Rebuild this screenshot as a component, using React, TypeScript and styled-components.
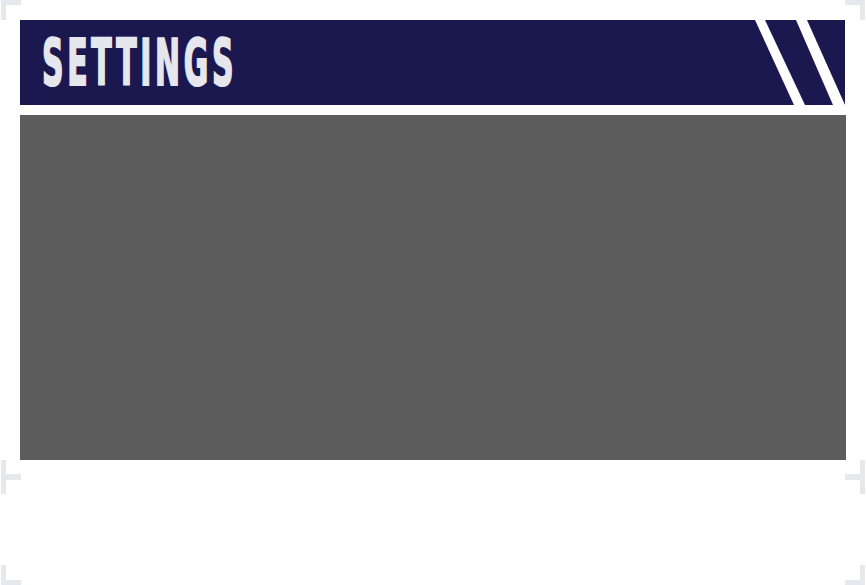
import React from "react";
import styled, { createGlobalStyle, css } from "styled-components";

const Global = createGlobalStyle`
  html, body { margin: 0; padding: 0; background: #ffffff; }
  body { font-family: "DejaVu Sans", sans-serif; overflow: hidden; }
`;

const Page = styled.div`
  width: 866px;
  display: flex;
  flex-direction: column;
`;

const Frame = styled.section<{ $height: number; $overlap?: number }>`
  position: relative;
  box-sizing: border-box;
  width: 866px;
  height: ${(p) => p.$height}px;
  margin-top: ${(p) => -(p.$overlap ?? 0)}px;
  padding: 20px 20px 20px 20px;
  display: flex;
  flex-direction: column;
  gap: 10px;
`;

type Pos = "tl" | "tr" | "bl" | "br";

const Corner = styled.span<{ $pos: Pos }>`
  position: absolute;
  width: 20px;
  height: 20px;
  box-sizing: border-box;
  border: 0 solid #e6e8ed;
  pointer-events: none;
  ${(p) =>
    p.$pos === "tl" &&
    css`
      top: 0;
      left: 1px;
      border-top-width: 5px;
      border-left-width: 5px;
    `}
  ${(p) =>
    p.$pos === "tr" &&
    css`
      top: 0;
      right: 1px;
      border-top-width: 5px;
      border-right-width: 5px;
    `}
  ${(p) =>
    p.$pos === "bl" &&
    css`
      bottom: 0;
      left: 1px;
      border-bottom-width: 5px;
      border-left-width: 5px;
    `}
  ${(p) =>
    p.$pos === "br" &&
    css`
      bottom: 0;
      right: 1px;
      border-bottom-width: 5px;
      border-right-width: 5px;
    `}
`;

const Header = styled.header`
  height: 85px;
  width: 825px;
  background: #1b1850;
  display: flex;
  align-items: center;
  justify-content: space-between;
  overflow: hidden;
  flex-shrink: 0;
`;

const Title = styled.h1`
  margin: 0 0 0 22px;
  font-family: "DejaVu Sans Condensed", "DejaVu Sans", sans-serif;
  font-weight: 700;
  font-size: 64px;
  line-height: 1;
  color: #e5e7ec;
  -webkit-text-stroke: 2px #e5e7ec;
  letter-spacing: 7px;
  transform: scaleX(0.52);
  transform-origin: left center;
  white-space: nowrap;
`;

const Stripes = styled.svg`
  display: block;
  flex-shrink: 0;
`;

const Panel = styled.div`
  flex: 0 0 345px;
  width: 826px;
  background: #5d5d5d;
`;

const Corners = () => (
  <>
    <Corner $pos="tl" />
    <Corner $pos="tr" />
    <Corner $pos="bl" />
    <Corner $pos="br" />
  </>
);

export default function App() {
  return (
    <>
      <Global />
      <Page>
        <Frame $height={480}>
          <Corners />
          <Header>
            <Title>SETTINGS</Title>
            <Stripes width="90" height="85" viewBox="0 0 90 85">
              <polygon points="0,0 10,0 50,85 39,85" fill="#ffffff" />
              <polygon points="41,0 52,0 90,85 78,85" fill="#ffffff" />
            </Stripes>
          </Header>
          <Panel />
        </Frame>
        <Frame $height={111} $overlap={6}>
          <Corners />
        </Frame>
      </Page>
    </>
  );
}
